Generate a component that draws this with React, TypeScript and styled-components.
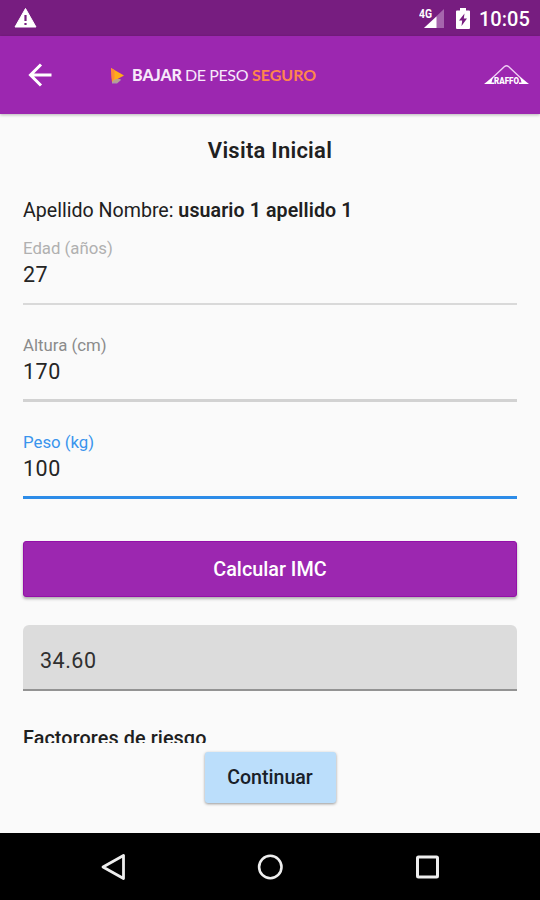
import React from "react";
import styled, { createGlobalStyle } from "styled-components";

const GlobalStyle = createGlobalStyle`
  *, *::before, *::after { box-sizing: border-box; }
  body { margin: 0; background: #fafafa; }
`;

const Screen = styled.div`
  width: 540px;
  height: 900px;
  display: flex;
  flex-direction: column;
  overflow: hidden;
  background: #fafafa;
  color: #202020;
  font-family: Roboto, sans-serif;
`;

const StatusBar = styled.div`
  height: 36px;
  flex: none;
  display: flex;
  align-items: center;
  padding: 0 11px 0 14px;
  background: #771d80;
  color: #fff;
`;

const StatusIcons = styled.div`
  display: flex;
  align-items: center;
  margin-left: auto;
`;

const BatterySlot = styled.div`
  display: flex;
  margin: 1px 0 0 10px;
`;

const Clock = styled.span`
  width: 50px;
  margin-left: 9px;
  padding-top: 2px;
  font-size: 20px;
  font-weight: 500;
  line-height: 36px;
  white-space: nowrap;
`;

const AppBar = styled.header`
  height: 78px;
  flex: none;
  display: flex;
  align-items: center;
  padding: 0 11px 0 28px;
  background: #9c27b0;
  box-shadow: 0 1px 3px rgba(0, 0, 0, 0.28);
  z-index: 1;
`;

const BackButton = styled.button`
  display: flex;
  padding: 0;
  border: 0;
  background: none;
`;

const Brand = styled.div`
  display: flex;
  align-items: center;
  margin-left: 59px;
`;

const BrandName = styled.div`
  display: flex;
  margin-left: 8px;
  font: 400 16px/20px Lato, sans-serif;
  color: #f7e9fa;
  white-space: pre;
`;

const BrandWord = styled.span<{ $color?: string; $weight: number; $width: number; $spacing: number }>`
  width: ${(p) => p.$width}px;
  color: ${(p) => p.$color ?? "inherit"};
  font-weight: ${(p) => p.$weight};
  letter-spacing: ${(p) => p.$spacing}px;
`;

const Partner = styled.div`
  display: flex;
  margin-left: auto;
`;

const Content = styled.main`
  height: 629px;
  flex: none;
  overflow: hidden;
  padding: 0 23px;
`;

const Title = styled.h1`
  margin: 23px 0 0;
  font-size: 22px;
  font-weight: 600;
  line-height: 28px;
  letter-spacing: 0.25px;
  text-align: center;
`;

const Patient = styled.p`
  margin: 32px 0 0;
  font-size: 19.6px;
  line-height: 28px;
  white-space: nowrap;

  b { font-weight: 600; letter-spacing: 0.1px; }
`;

const Fields = styled.div`
  display: grid;
  gap: 30px;
  padding-top: 13px;
`;

const Field = styled.div<{ $tone: string; $line: string; $thickness: number }>`
  height: 67px;
  display: flex;
  flex-direction: column;
  border-bottom: ${(p) => p.$thickness}px solid ${(p) => p.$line};
  color: ${(p) => p.$tone};
`;

const Label = styled.label`
  font-size: 16.8px;
  line-height: 20px;
`;

const Value = styled.span`
  margin-top: 4px;
  color: #252525;
  font-size: 21.5px;
  line-height: 26px;
  letter-spacing: 0.5px;
`;

const CalculateButton = styled.button`
  width: 100%;
  height: 56px;
  display: block;
  margin: 42px 0 0;
  padding: 2px 0 0;
  border: 1px solid #940fa8;
  border-radius: 3px;
  background: #9c27b0;
  box-shadow: 0 2px 3px rgba(0, 0, 0, 0.3);
  color: #fff;
  font: 500 19.8px/24px Roboto, sans-serif;
`;

const Result = styled.div`
  height: 66px;
  margin-top: 28px;
  padding: 6px 17px 0;
  display: flex;
  align-items: center;
  border-bottom: 2px solid #939393;
  border-radius: 6px 6px 0 0;
  background: #dcdcdc;
  color: #303030;
  font-size: 21.5px;
  letter-spacing: 0.5px;
`;

const Section = styled.h2`
  margin: 35px 0 0;
  font-size: 19.8px;
  font-weight: 500;
  line-height: 26px;
  letter-spacing: 0.1px;
  white-space: nowrap;
`;

const Footer = styled.footer`
  height: 90px;
  flex: none;
  display: flex;
  justify-content: center;
  align-items: flex-start;
  padding-top: 9px;
`;

const ContinueButton = styled.button`
  width: 131px;
  height: 51px;
  padding: 0;
  border: 0;
  border-radius: 3px;
  background: #bbdefb;
  box-shadow: 0 1px 3px rgba(0, 0, 0, 0.4);
  color: #182029;
  font: 500 19.6px/24px Roboto, sans-serif;
`;

const NavBar = styled.nav`
  height: 67px;
  flex: none;
  display: grid;
  grid-template-columns: repeat(3, 157px);
  justify-content: center;
  align-items: center;
  justify-items: center;
  background: #000;
`;

const fields = [
  { label: "Edad (años)", value: "27", tone: "#b0b0b0", line: "#d9d9d9", thickness: 2 },
  { label: "Altura (cm)", value: "170", tone: "#8b8b8b", line: "#d2d2d2", thickness: 3 },
  { label: "Peso (kg)", value: "100", tone: "#3994ed", line: "#2d8ce8", thickness: 3 },
];

function WarningIcon() {
  return (
    <svg width="23" height="20" viewBox="0 0 23 20">
      <path d="M11.5 0.5 L22 19 H1 Z" fill="#fff" stroke="#fff" strokeLinejoin="round" />
      <path d="M11.5 7v6M11.5 15v2" stroke="#771d80" strokeWidth="2.2" />
    </svg>
  );
}

function SignalIcon() {
  return (
    <svg width="27" height="24" viewBox="0 0 27 24">
      <path d="M25 3V22H5Z" fill="#a665ad" />
      <path d="M17.5 10.500V22H5Z" fill="#fff" />
      <text x="0" y="12" fill="#fff" fontFamily="Roboto" fontWeight="700" fontSize="13" textLength="13" lengthAdjust="spacingAndGlyphs">4G</text>
    </svg>
  );
}

function BatteryIcon() {
  return (
    <svg width="14" height="21" viewBox="0 0 14 21">
      <path d="M4 0h6v2.500h3q1 0 1 1V20q0 1-1 1H1q-1 0-1-1V3.500q0-1 1-1h3Z" fill="#fff" />
      <path d="M8.500 5.500 3 12.500h3.200L5.500 18 11 10.500H7.800Z" fill="#771d80" />
    </svg>
  );
}

function BrandMark() {
  return (
    <svg width="13" height="17" viewBox="0 0 13 17">
      <path d="M1 12 10 13 6 16.500H1Z" fill="#aa94af" />
      <path d="M0 1 13 8.500 1 15Z" fill="#ffad19" />
      <path d="M0 1 3.500 3v8L1 15Z" fill="#ff8b36" />
      <path d="M2 13.500 5 12h5L6.500 15.500H1Z" fill="#b8a28f" />
    </svg>
  );
}

function RaffoLogo() {
  return (
    <svg width="45" height="22" viewBox="0 0 45 22">
      <path d="M4 18 20.500 2.500Q22.500 0.800 24.500 2.500L41 18" fill="none" stroke="#f0cef4" strokeWidth="1.400" />
      <path d="M0 20 9 13 7.500 18.500H10V20ZM45 20 36 13 37.500 18.500H35V20Z" fill="#fff" />
      <text x="10" y="20" fill="#fff" fontFamily="Roboto" fontWeight="900" fontSize="9" textLength="25" lengthAdjust="spacingAndGlyphs">RAFFO</text>
    </svg>
  );
}

export default function App() {
  return (
    <>
      <GlobalStyle />
      <Screen>
        <StatusBar>
          <WarningIcon />
          <StatusIcons>
            <SignalIcon />
            <BatterySlot><BatteryIcon /></BatterySlot>
            <Clock>10:05</Clock>
          </StatusIcons>
        </StatusBar>
        <AppBar>
          <BackButton aria-label="Volver">
            <svg width="24" height="24" viewBox="0 0 24 24" fill="none" stroke="#fff" strokeWidth="3">
              <path d="M23.500 12H2.500M13 1.500 2.500 12 13 22.500" />
            </svg>
          </BackButton>
          <Brand>
            <BrandMark />
            <BrandName>
              <BrandWord $weight={900} $width={53} $spacing={0}>BAJAR</BrandWord>
              <BrandWord $weight={400} $width={67} $spacing={-0.4}>DE PESO</BrandWord>
              <BrandWord $weight={700} $width={65} $spacing={0} $color="#ff864c">SEGURO</BrandWord>
            </BrandName>
          </Brand>
          <Partner><RaffoLogo /></Partner>
        </AppBar>
        <Content>
          <Title>Visita Inicial</Title>
          <Patient>Apellido Nombre: <b>usuario 1 apellido 1</b></Patient>
          <Fields>
            {fields.map((f) => (
              <Field key={f.label} $tone={f.tone} $line={f.line} $thickness={f.thickness}>
                <Label>{f.label}</Label>
                <Value>{f.value}</Value>
              </Field>
            ))}
          </Fields>
          <CalculateButton>Calcular IMC</CalculateButton>
          <Result>34.60</Result>
          <Section>Factorores de riesgo</Section>
        </Content>
        <Footer><ContinueButton>Continuar</ContinueButton></Footer>
        <NavBar>
          <svg width="26" height="28" viewBox="0 0 26 28"><path d="M23.500 2.500V25.500L3 14Z" fill="none" stroke="#eee" strokeWidth="2.800" strokeLinejoin="round" /></svg>
          <svg width="28" height="28" viewBox="0 0 28 28"><circle cx="14.300" cy="14" r="11.200" fill="none" stroke="#eee" strokeWidth="2.600" /></svg>
          <svg width="26" height="26" viewBox="0 0 26 26"><rect x="3.500" y="3" width="20" height="20" rx="1" fill="none" stroke="#eee" strokeWidth="3" /></svg>
        </NavBar>
      </Screen>
    </>
  );
}
